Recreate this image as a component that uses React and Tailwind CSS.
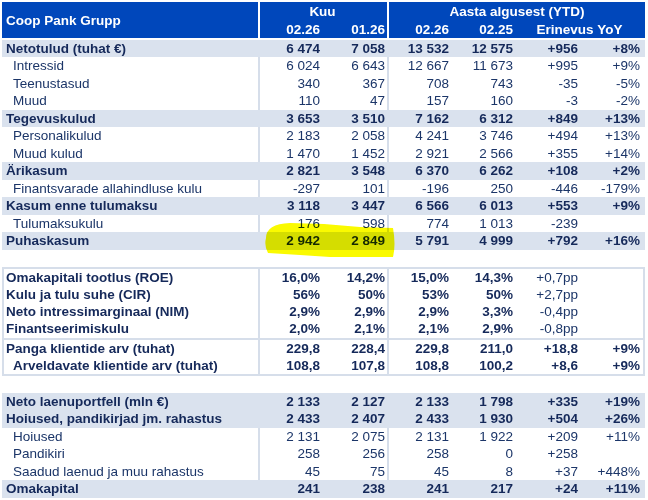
import React from "react";

const COLS1 = "grid grid-cols-[258px_64px_65px_63px_64px_64px_65px]";
const COLS2 = "grid grid-cols-[256px_64px_65px_63px_64px_64px_63px]";

const sec1 = [
  { l: "Netotulud (tuhat €)", v: ["6 474", "7 058", "13 532", "12 575", "+956", "+8%"], b: true },
  { l: "Intressid", v: ["6 024", "6 643", "12 667", "11 673", "+995", "+9%"] },
  { l: "Teenustasud", v: ["340", "367", "708", "743", "-35", "-5%"] },
  { l: "Muud", v: ["110", "47", "157", "160", "-3", "-2%"] },
  { l: "Tegevuskulud", v: ["3 653", "3 510", "7 162", "6 312", "+849", "+13%"], b: true },
  { l: "Personalikulud", v: ["2 183", "2 058", "4 241", "3 746", "+494", "+13%"] },
  { l: "Muud kulud", v: ["1 470", "1 452", "2 921", "2 566", "+355", "+14%"] },
  { l: "Ärikasum", v: ["2 821", "3 548", "6 370", "6 262", "+108", "+2%"], b: true },
  { l: "Finantsvarade allahindluse kulu", v: ["-297", "101", "-196", "250", "-446", "-179%"] },
  { l: "Kasum enne tulumaksu", v: ["3 118", "3 447", "6 566", "6 013", "+553", "+9%"], b: true },
  { l: "Tulumaksukulu", v: ["176", "598", "774", "1 013", "-239", ""] },
  { l: "Puhaskasum", v: ["2 942", "2 849", "5 791", "4 999", "+792", "+16%"], b: true },
];

const sec2a = [
  { l: "Omakapitali tootlus (ROE)", v: ["16,0%", "14,2%", "15,0%", "14,3%", "+0,7pp", ""] },
  { l: "Kulu ja tulu suhe (CIR)", v: ["56%", "50%", "53%", "50%", "+2,7pp", ""] },
  { l: "Neto intressimarginaal (NIM)", v: ["2,9%", "2,9%", "2,9%", "3,3%", "-0,4pp", ""] },
  { l: "Finantseerimiskulu", v: ["2,0%", "2,1%", "2,1%", "2,9%", "-0,8pp", ""] },
];
const sec2b = [
  { l: "Panga klientide arv (tuhat)", v: ["229,8", "228,4", "229,8", "211,0", "+18,8", "+9%"] },
  { l: "Arveldavate klientide arv (tuhat)", v: ["108,8", "107,8", "108,8", "100,2", "+8,6", "+9%"], ind: true },
];

const sec3 = [
  { l: "Neto laenuportfell (mln €)", v: ["2 133", "2 127", "2 133", "1 798", "+335", "+19%"], b: true },
  { l: "Hoiused, pandikirjad jm. rahastus", v: ["2 433", "2 407", "2 433", "1 930", "+504", "+26%"], b: true },
  { l: "Hoiused", v: ["2 131", "2 075", "2 131", "1 922", "+209", "+11%"] },
  { l: "Pandikiri", v: ["258", "256", "258", "0", "+258", ""] },
  { l: "Saadud laenud ja muu rahastus", v: ["45", "75", "45", "8", "+37", "+448%"] },
  { l: "Omakapital", v: ["241", "238", "241", "217", "+24", "+11%"], b: true },
];

const pr1 = ["pr-[4px]", "pr-[2px] border-r-2", "pr-[3px]", "pr-[3px]", "pr-[2px]", "pr-[5px]"];
const pr2 = ["pr-[4px]", "pr-[2px] border-r-2", "pr-[3px]", "pr-[3px]", "pr-[2px]", "pr-[3px]"];

function Row({ r, cols, pr, h, regularCol5, boldAll }) {
  const bold = r.b || boldAll;
  const shade = r.b;
  let pl = "pl-[11px]";
  if (r.b) pl = "pl-[4px]";
  else if (boldAll) pl = r.ind ? "pl-[9px]" : "pl-[2px]";
  return (
    <div
      className={`${cols} ${h} ${shade ? "bg-[#dae2ee] border-[#dae2ee]" : "bg-white border-[#d6deea]"} ${
        bold ? "font-bold text-[#15295a]" : "text-[#1b3568]"
      }`}
    >
      <div className={`border-r-2 border-inherit whitespace-nowrap ${pl}`}>{r.l}</div>
      {r.v.map((x, i) => (
        <div
          key={i}
          className={`text-right whitespace-nowrap border-inherit ${pr[i]} ${
            regularCol5 && i === 4 ? "font-normal text-[#1b3568]" : ""
          }`}
        >
          {x}
        </div>
      ))}
    </div>
  );
}

export default function App() {
  return (
    <div className="relative w-[648px] h-[500px] bg-white overflow-hidden font-['Liberation_Sans',Arial,sans-serif] text-[13.5px]">
      <div className="pt-[2px] pl-[2px] w-[645px]">
        {/* Header */}
        <div className={`${COLS1} grid-rows-[18px_18px] bg-[#0047bb] text-white font-bold leading-[18px]`}>
          <div className="row-span-2 border-r-2 border-white flex items-center pl-[4px] pt-[2px]">Coop Pank Grupp</div>
          <div className="col-span-2 border-r-2 border-white text-center pr-[2px] pt-[1px]">Kuu</div>
          <div className="col-span-4 text-center pt-[1px]">Aasta algusest (YTD)</div>
          <div className="text-right pr-[4px] pt-[1px]">02.26</div>
          <div className="text-right pr-[2px] border-r-2 border-white pt-[1px]">01.26</div>
          <div className="text-right pr-[3px] pt-[1px]">02.26</div>
          <div className="text-right pr-[3px] pt-[1px]">02.25</div>
          <div className="col-span-2 text-center pr-[2px] pt-[1px]">Erinevus YoY</div>
        </div>
        <div className="h-[1.5px]" />
        <div className="leading-[17.5px]">
          {sec1.map((r, i) => (
            <Row key={i} r={r} cols={COLS1} pr={pr1} h="h-[17.5px]" />
          ))}
        </div>

        {/* Section 2 */}
        <div className="mt-[17px] border-2 border-[#d6deea] leading-[17.25px]">
          {sec2a.map((r, i) => (
            <Row key={i} r={r} cols={COLS2} pr={pr2} h="h-[17.25px]" boldAll regularCol5 />
          ))}
          <div className="h-[2px] bg-[#d6deea]" />
          {sec2b.map((r, i) => (
            <Row key={i} r={r} cols={COLS2} pr={pr2} h="h-[17.25px]" boldAll />
          ))}
        </div>

        {/* Section 3 */}
        <div className="mt-[16.5px] leading-[17.5px]">
          {sec3.map((r, i) => (
            <Row key={i} r={r} cols={COLS1} pr={pr1} h="h-[17.5px]" />
          ))}
        </div>
      </div>

      {/* Yellow highlighter mark */}
      <svg className="absolute left-0 top-0 pointer-events-none mix-blend-multiply" width="648" height="500">
        <path
          d="M266 238 Q266 224 290 223 L324 224 L360 227 L393 228 Q396 245 393 257 L330 257 L300 255 L268 253 Q264 246 266 238 Z"
          fill="#fafa00"
        />
      </svg>
    </div>
  );
}
